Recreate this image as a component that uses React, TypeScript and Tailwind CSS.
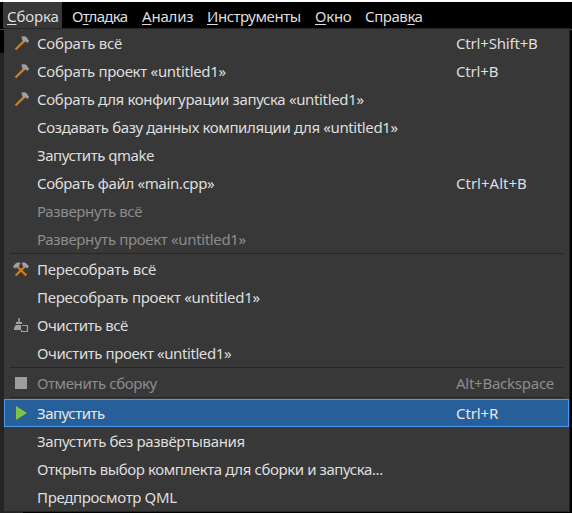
import type { ReactNode } from "react";

type IconName = "hammer" | "rebuild" | "clean" | "stop" | "run";
type Item = { label: string; fit: string; keys?: string; keysFit?: string; icon?: IconName; off?: boolean; active?: boolean };

const groups: Item[][] = [
  [
    { label: "Собрать всё", fit: "tracking-[-0.25px]", keys: "Ctrl+Shift+B", keysFit: "tracking-[-0.18px]", icon: "hammer" },
    { label: "Собрать проект «untitled1»", fit: "tracking-[-0.3px]", keys: "Ctrl+B", keysFit: "tracking-[-0.18px]", icon: "hammer" },
    { label: "Собрать для конфигурации запуска «untitled1»", fit: "tracking-[-0.35px]", icon: "hammer" },
    { label: "Создавать базу данных компиляции для «untitled1»", fit: "tracking-[-0.38px]" },
    { label: "Запустить qmake", fit: "tracking-[-0.47px]" },
    { label: "Собрать файл «main.cpp»", fit: "tracking-[-0.37px]", keys: "Ctrl+Alt+B", keysFit: "tracking-[0px]" },
    { label: "Развернуть всё", fit: "tracking-[-0.35px]", off: true },
    { label: "Развернуть проект «untitled1»", fit: "tracking-[-0.35px]", off: true },
  ],
  [
    { label: "Пересобрать всё", fit: "tracking-[-0.2px]", icon: "rebuild" },
    { label: "Пересобрать проект «untitled1»", fit: "tracking-[-0.27px]" },
    { label: "Очистить всё", fit: "tracking-[-0.45px]", icon: "clean" },
    { label: "Очистить проект «untitled1»", fit: "tracking-[-0.41px]" },
  ],
  [{ label: "Отменить сборку", fit: "tracking-[-0.4px]", keys: "Alt+Backspace", keysFit: "tracking-[-0.25px]", icon: "stop", off: true }],
  [
    { label: "Запустить", fit: "tracking-[-0.5px]", keys: "Ctrl+R", keysFit: "tracking-[-0.1px]", icon: "run", active: true },
    { label: "Запустить без развёртывания", fit: "tracking-[-0.35px]" },
    { label: "Открыть выбор комплекта для сборки и запуска...", fit: "tracking-[-0.41px]" },
    { label: "Предпросмотр QML", fit: "tracking-[-0.35px]" },
  ],
];

const drawings: Record<IconName, ReactNode> = {
  hammer: (
    <>
      <path d="M2.500 14.500 11 6.200" stroke="#d87a16" strokeWidth="2.4" />
      <path d="M8 2C10 .9 12.700 1.200 14.200 2.900L15 4.500 16.200 5.500 14.500 8 13 7 12.300 6.200 11.500 7.300 9 4.900C9.500 3.800 9.200 2.900 8 2Z" fill="#a0a0a0" />
    </>
  ),
  rebuild: (
    <>
      <path d="M2.700 14.500 11.300 6M13.300 14.500 4.700 6" stroke="#d87a16" strokeWidth="2.3" />
      <path d="M7.500 2C5 1.200 3 1.700 2 3.300L0 5.300 1.700 7.500 3.300 6.200 4 7 6.400 4.700C6.400 3.600 6.700 3 7.500 2ZM8.500 2C11 1.200 13 1.700 14 3.300L16 5.300 14.300 7.500 12.700 6.200 12 7 9.600 4.700C9.600 3.600 9.300 3 8.500 2Z" fill="#a0a0a0" />
    </>
  ),
  clean: (
    <>
      <path d="M5.200 1h1.600v4h2.200v2H3V5h2.200zM2.500 8H8v5H1v-1.500z" fill="#a0a0a0" />
      <path d="M9 8.500h5.500v6H8.500v-1.500" stroke="#a0a0a0" strokeWidth="1.2" />
    </>
  ),
  stop: <path d="M2 2h12v12H2z" fill="#9d9d9d" />,
  run: <path d="M3 1v14l11-7z" fill="#80c342" />,
};

const bar = [
  ["", "С", "борка", "mr-[6px] w-[59px] bg-[#383838] tracking-[-0.15px]"],
  ["О", "т", "ладка", "w-[70px] tracking-[-0.7px]"],
  ["", "А", "нализ", "w-[65px] tracking-[-0.2px]"],
  ["", "И", "нструменты", "w-[108px] tracking-[-0.45px]"],
  ["", "О", "кно", "w-[50px] tracking-[-0.25px]"],
  ["Справ", "к", "а", "w-[72px] tracking-[-0.45px]"],
];

function Row({ item }: { item: Item }) {
  const tone = item.active
    ? "border-[#4a9bf0] bg-[#275f9b] text-[#e8e8e8]"
    : item.off
      ? "border-transparent text-[#8c8c8c]"
      : "border-transparent text-[#dedede]";
  return (
    <div className={`flex h-7 items-center border pl-2 ${tone}`}>
      <span className="w-4 shrink-0">
        {item.icon && (
          <svg viewBox="0 0 16 16" className="block size-4 overflow-visible" fill="none">
            {drawings[item.icon]}
          </svg>
        )}
      </span>
      <span className={`w-[427px] shrink-0 pl-[8px] whitespace-nowrap ${item.fit}`}>{item.label}</span>
      <span className={`whitespace-nowrap ${item.keysFit ?? ""}`}>{item.keys}</span>
    </div>
  );
}

export default function App() {
  return (
    <div className="h-[513px] w-[572px] overflow-hidden bg-black font-['Noto_Sans',sans-serif] text-[15px] leading-5">
      <div className="h-[2px] bg-white" />
      <div className="flex h-[26px] pl-[3px] text-[#dedede]">
        {bar.map(([before, key, after, look]) => (
          <div key={before + key + after} className={`${look} pt-[4px] pl-[4px] whitespace-nowrap`}>
            {before}
            <span className="underline decoration-1 underline-offset-2">{key}</span>
            {after}
          </div>
        ))}
      </div>
      <div className="flex">
        <div className="flex w-1 flex-col">
          <div className="mt-px h-[24px] border-t border-[#484848] bg-black" />
          <div className="flex-1 bg-[#242424]" />
        </div>
        <div className="w-[566px] border-y border-r border-[#252525] bg-[#383838]">
          {groups.map((group, i) => (
            <div key={i}>
              {i > 0 && (
                <div className="h-[2px] pr-[5px] pl-[6px]">
                  <div className="h-px bg-[#272727]" />
                </div>
              )}
              {group.map((item) => (
                <Row key={item.label} item={item} />
              ))}
            </div>
          ))}
        </div>
        <div className="mt-px h-px flex-1 bg-[#585858]" />
      </div>
      <div className="h-px w-[23px] bg-[#242424]" />
    </div>
  );
}
